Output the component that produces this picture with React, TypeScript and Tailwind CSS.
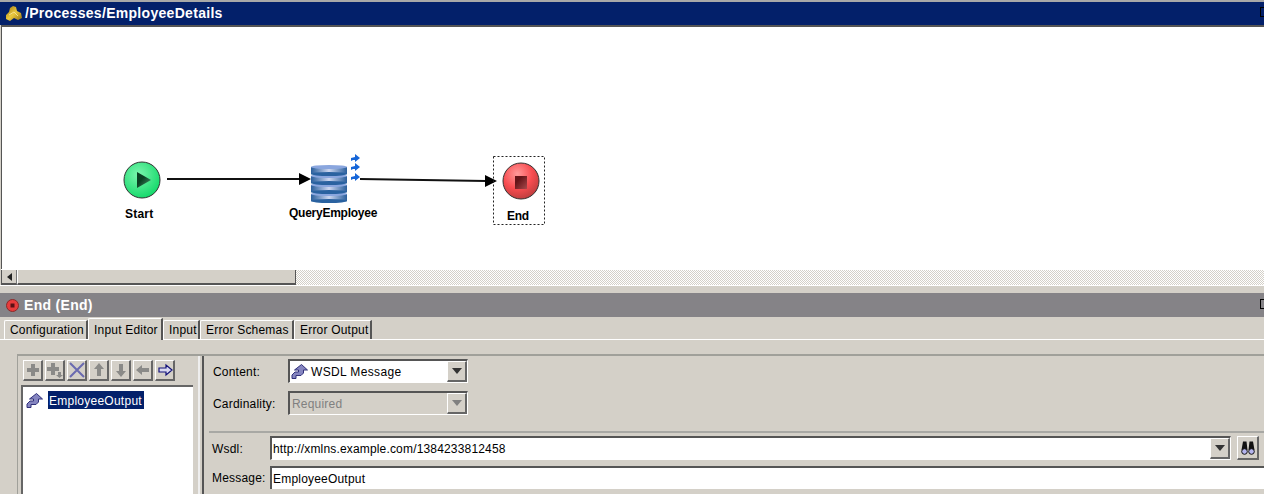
import type { ReactNode } from 'react'

const tabs = [
  { label: 'Configuration', width: 'w-[84px]' },
  { label: 'Input Editor', width: 'w-[75px]' },
  { label: 'Input', width: 'w-[37px]' },
  { label: 'Error Schemas', width: 'w-[94px]' },
  { label: 'Error Output', width: 'w-[78px]' },
]

function ProcessIcon() {
  return (
    <svg width="18" height="18" viewBox="0 0 18 18" className="shrink-0">
      <defs>
        <linearGradient id="gold" x1="0" y1="0" x2="1" y2="1">
          <stop offset="0" stopColor="#9a7410" />
          <stop offset="0.5" stopColor="#ecc93e" />
          <stop offset="1" stopColor="#8f6d10" />
        </linearGradient>
      </defs>
      <path d="M8 1 L11 2 L12 6 L16 8 L17 13 L13 15 L9 13 L5 16 L1 14 L1 10 L4 7 L5 3 Z" fill="url(#gold)" />
      <path d="M4 10 L9 7 L13 11" stroke="#f5e08a" strokeWidth="1" fill="none" />
    </svg>
  )
}

function MessageIcon() {
  return (
    <svg width="17" height="15" viewBox="0 0 17 15" className="shrink-0">
      <path
        d="M1 14.5 V11 L4 8 H7.5 V6 H3.5 L10.5 0.5 L16.5 6 H12.5 V9 L10 11.5 H5 V14.5 Z"
        fill="#8585c0"
        stroke="#30307a"
        strokeWidth="1"
      />
    </svg>
  )
}

function DownArrow({ disabled }: { disabled?: boolean }) {
  return (
    <svg width="10" height="6" viewBox="0 0 10 6">
      <path d="M0 0 H10 L5 6 Z" fill={disabled ? '#808080' : '#333333'} />
    </svg>
  )
}

function ToolButton({ children }: { children: ReactNode }) {
  return (
    <div className="flex h-[21px] w-[20px] items-center justify-center border-t border-l border-t-white border-l-white border-r-2 border-b-2 border-r-[#666] border-b-[#666] bg-[#d4d0c8]">
      <svg width="16" height="16" viewBox="0 0 16 16">
        {children}
      </svg>
    </div>
  )
}

function Combo({ children, disabled, width }: { children: ReactNode; disabled?: boolean; width: string }) {
  return (
    <div className={`flex h-[24px] items-stretch border-t-2 border-l-2 border-t-[#555] border-l-[#555] border-b border-r border-b-white border-r-white ${width} ${disabled ? 'bg-[#d4d0c8]' : 'bg-white'}`}>
      <div className={`flex min-w-0 flex-1 items-center gap-[3px] pl-[1px] ${disabled ? 'text-[#808080]' : 'text-black'}`}>
        {children}
      </div>
      <div className="flex w-[20px] items-center justify-center border-t border-l border-t-white border-l-white border-r-2 border-b-2 border-r-[#666] border-b-[#666] bg-[#d4d0c8]">
        <DownArrow disabled={disabled} />
      </div>
    </div>
  )
}

function ProcessCanvas() {
  return (
    <div className="relative ml-[1px] h-[244px] overflow-hidden border-l border-t-2 border-l-[#555] border-t-[#555] bg-white">
      <svg width="560" height="243" className="absolute left-[-2px] top-[-1px]">
        <defs>
          <radialGradient id="greenBall" cx="0.4" cy="0.35" r="0.7">
            <stop offset="0" stopColor="#7cf5ae" />
            <stop offset="1" stopColor="#10d868" />
          </radialGradient>
          <radialGradient id="redBall" cx="0.4" cy="0.3" r="0.75">
            <stop offset="0" stopColor="#ff9a9a" />
            <stop offset="0.55" stopColor="#f84c50" />
            <stop offset="1" stopColor="#b83c3c" />
          </radialGradient>
          <linearGradient id="disk" x1="0" y1="0" x2="1" y2="0">
            <stop offset="0" stopColor="#2a5f9c" />
            <stop offset="0.5" stopColor="#ccd6f0" />
            <stop offset="1" stopColor="#2a5f9c" />
          </linearGradient>
          <linearGradient id="playFill" x1="0" y1="0" x2="1" y2="1">
            <stop offset="0.4" stopColor="#0a3f22" />
            <stop offset="1" stopColor="#4c9a70" />
          </linearGradient>
          <linearGradient id="stopFill" x1="0" y1="0" x2="1" y2="1">
            <stop offset="0.3" stopColor="#641418" />
            <stop offset="1" stopColor="#a84a4c" />
          </linearGradient>
        </defs>

        <line x1="167" y1="153" x2="300" y2="153" stroke="#111" strokeWidth="2" />
        <path d="M299 147 L311 153 L299 159 Z" fill="#000" />
        <line x1="360" y1="153" x2="486" y2="155" stroke="#111" strokeWidth="2" />
        <path d="M485 149 L497 155 L485 161 Z" fill="#000" />

        <circle cx="142" cy="154" r="18" fill="url(#greenBall)" stroke="#333" strokeWidth="1" />
        <path d="M137 146 L151 154 L137 162 Z" fill="url(#playFill)" />

        {[168, 159, 150, 141].map((y) => (
          <g key={y} transform={`translate(0 ${y})`}>
            <rect x="311" y="0" width="36" height="7" fill="url(#disk)" />
            <ellipse cx="329" cy="7" rx="18" ry="2" fill="#2a62a0" />
            <ellipse cx="329" cy="0" rx="18" ry="2" fill="#8aa6de" />
          </g>
        ))}

        {[132, 141, 151].map((y) => (
          <path key={y} d={`M351 ${y + 3} V${y} L355 ${y - 1} V${y - 4} L360 ${y} L355 ${y + 4} V${y + 2} L353 ${y + 2} Z`} fill="#1565d8" />
        ))}

        <rect x="493.5" y="130.5" width="51" height="68" fill="none" stroke="#222" strokeDasharray="2 2" />
        <circle cx="521" cy="155" r="18" fill="url(#redBall)" stroke="#333" strokeWidth="1" />
        <rect x="515" y="150" width="12" height="13" fill="url(#stopFill)" />
      </svg>

      <span className="absolute left-[123px] top-[180px] text-[12px] font-bold leading-[14px] tracking-[0.2px] text-black">Start</span>
      <span className="absolute left-[287px] top-[179px] text-[12px] font-bold leading-[14px] tracking-[-0.25px] text-black">QueryEmployee</span>
      <span className="absolute left-[505px] top-[182px] text-[12px] font-bold leading-[14px] tracking-[-0.25px] text-black">End</span>
    </div>
  )
}

export default function App() {
  return (
    <div className="h-[494px] w-[1264px] overflow-hidden bg-[#d4d0c8] font-['Liberation_Sans',Arial,sans-serif] text-[12px] tracking-[0.2px] text-black">
      <div className="h-[2px] bg-[#a8a8a8]" />
      <div className="flex h-[23px] items-center gap-[2px] bg-[#03206a] pl-[5px] text-[14px] font-bold tracking-[0.3px] text-white">
        <ProcessIcon />
        <span className="flex-1">/Processes/EmployeeDetails</span>
        <div className="mr-[-6px] mb-[3px] h-[10px] w-[10px] border border-black" />
      </div>

      <ProcessCanvas />

      {/* horizontal scrollbar */}
      <div className="ml-[1px] flex h-[16px] border-t border-white bg-[repeating-conic-gradient(#d4d0c8_0_25%,#fff_0_50%)] bg-[length:2px_2px]">
        <div className="flex w-[16px] items-center justify-center border-l border-l-[#555] border-b-2 border-b-[#555] border-r border-r-[#777] bg-[#d4d0c8]">
          <svg width="5" height="8" viewBox="0 0 5 8">
            <path d="M5 0 V8 L0 4 Z" fill="#222" />
          </svg>
        </div>
        <div className="w-[279px] border-l border-l-white border-b-2 border-b-[#555] border-r border-r-[#555] bg-[#d4d0c8]" />
      </div>

      <div className="h-[1px] bg-white" />
      <div className="h-[7px]" />

      <div className="flex h-[24px] items-center gap-[5px] bg-[#858387] pl-[6px] text-[14px] font-bold tracking-[0.3px] text-white">
        <svg width="13" height="13" viewBox="0 0 13 13" className="shrink-0">
          <circle cx="6.5" cy="6.5" r="6" fill="#e83c3c" stroke="#8a2a2a" />
          <rect x="4.5" y="4.5" width="4" height="4" fill="#5a1015" />
        </svg>
        <span className="flex-1">End (End)</span>
        <div className="mr-[-6px] mb-[3px] h-[10px] w-[10px] border border-black" />
      </div>

      {/* tabs */}
      <div className="flex h-[23px] items-end border-b border-white pl-[4px]">
        {tabs.map((tab) => {
          const active = tab.label === 'Input Editor'
          return (
            <div
              key={tab.label}
              className={
                active
                  ? `relative z-10 mb-[-1px] flex h-[22px] shrink-0 items-start rounded-tl-[2px] border-t border-l border-r-2 border-t-white border-l-white border-r-[#555] bg-[#d4d0c8] pl-[5px] pt-[2px] ${tab.width}`
                  : `flex h-[19px] shrink-0 items-center rounded-tl-[2px] border-t border-l border-r-2 border-t-white border-l-white border-r-[#555] pl-[5px] ${tab.width}`
              }
            >
              {tab.label}
            </div>
          )
        })}
      </div>

      {/* editor panel */}
      <div className="ml-[17px] mt-[14px] flex h-[200px] border-t-2 border-l border-t-[#a0a09a] border-l-[#a0a09a]">
        <div className="w-[182px] shrink-0 border-r-2 border-r-[#eeeeee] pl-[3px] pr-[5px] pt-[4px]">
          <div className="flex gap-[2px] pl-[2px]">
            <ToolButton>
              <path d="M6 2 H10 V6 H14 V10 H10 V14 H6 V10 H2 V6 H6 Z" fill="#8a8a88" />
            </ToolButton>
            <ToolButton>
              <path d="M4 1 H8 V5 H12 V9 H8 V13 H4 V9 H0 V5 H4 Z M11 10 H14 V13 H16 L12.5 16 L9 13 H11 Z" fill="#8a8a88" />
            </ToolButton>
            <ToolButton>
              <path d="M1 1 L15 15 M15 1 L1 15" stroke="#6a6ab0" strokeWidth="2" fill="none" />
            </ToolButton>
            <ToolButton>
              <path d="M8 1 L13 7 H10 V14 H6 V7 H3 Z" fill="#8a8a88" />
            </ToolButton>
            <ToolButton>
              <path d="M8 15 L13 9 H10 V2 H6 V9 H3 Z" fill="#8a8a88" />
            </ToolButton>
            <ToolButton>
              <path d="M1 8 L7 3 V6 H14 V10 H7 V13 Z" fill="#8a8a88" />
            </ToolButton>
            <ToolButton>
              <path d="M15 8 L9 3 V6 H2 V10 H9 V13 Z" fill="#d8d8f0" stroke="#12127a" strokeWidth="1.2" />
            </ToolButton>
          </div>
          <div className="mt-[4px] h-[120px] border-t-2 border-l-2 border-t-[#666] border-l-[#666] bg-white pl-[3px] pt-[4px]">
            <div className="flex items-center gap-[5px]">
              <MessageIcon />
              <span className="w-[96px] bg-[#03206a] pb-0 pl-[1px] pt-[2px] leading-[16px] tracking-[0.25px] text-white">EmployeeOutput</span>
            </div>
          </div>
        </div>

        <div className="ml-[2px] min-w-0 flex-1 border-l-2 border-l-[#555]">
          <div className="grid grid-cols-[75px_180px] items-center gap-y-[8px] pl-[9px] pt-[3px]">
            <span className="pt-[1px]">Content:</span>
            <Combo width="w-[180px]">
              <MessageIcon />
              <span className="tracking-[0.35px]">WSDL Message</span>
            </Combo>
            <span className="pt-[1px]">Cardinality:</span>
            <Combo width="w-[180px]" disabled>
              <span className="pl-[1px]">Required</span>
            </Combo>
          </div>

          <div className="ml-[5px] mt-[16px] border-t-2 border-t-[#a8a8a4]">
            <div className="grid grid-cols-[58px_1fr] items-center gap-y-[6px] pl-[3px] pt-[3px]">
              <span className="pt-[1px]">Wsdl:</span>
              <div className="flex items-center gap-[6px]">
                <Combo width="w-[961px]">
                  <span className="pt-[1px] tracking-[0.17px]">http://xmlns.example.com/1384233812458</span>
                </Combo>
                <div className="flex h-[24px] w-[22px] shrink-0 items-center justify-center border-t border-l border-t-white border-l-white border-r-2 border-b-2 border-r-[#666] border-b-[#666]">
                  <svg width="14" height="14" viewBox="0 0 14 14">
                    <path d="M2 0.5 H5.5 L6.5 9 H0.5 Z M8.5 0.5 H12 L13.5 9 H7.5 Z" fill="#111" />
                    <circle cx="3.5" cy="10.5" r="2.8" fill="#b4b4ee" stroke="#111" />
                    <circle cx="10.5" cy="10.5" r="2.8" fill="#b4b4ee" stroke="#111" />
                  </svg>
                </div>
                <div className="h-[24px] w-[4px] shrink-0 border-t border-l border-t-white border-l-white" />
              </div>
              <span>Message:</span>
              <div className="flex h-[23px] items-center border-t-2 border-l-2 border-t-[#555] border-l-[#555] bg-white pl-[1px]">
                EmployeeOutput
              </div>
            </div>
          </div>
        </div>
      </div>
    </div>
  )
}
